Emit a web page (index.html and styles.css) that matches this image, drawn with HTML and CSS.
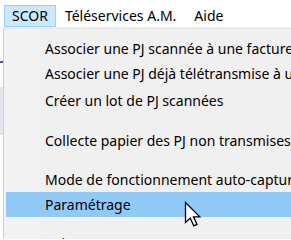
FILE: index.html
```html
<!DOCTYPE html>
<html lang="fr">
<head>
    <meta charset="UTF-8">
    <title>SCOR - Menu</title>
    <link rel="stylesheet" href="styles.css">
</head>
<body>
    <div class="menubar">
        <div class="menubar-item active">SCOR</div>
        <div class="menubar-item">Téléservices A.M.</div>
        <div class="menubar-item">Aide</div>
    </div>
    <div class="window">
        <div class="backdrop">
            <div class="backdrop-mark"></div>
            <div class="backdrop-panel"></div>
        </div>
        <div class="dropdown">
            <div class="menu-item">Associer une PJ scannée à une facture</div>
            <div class="menu-item">Associer une PJ déjà télétransmise à une facture</div>
            <div class="menu-item lot">Créer un lot de PJ scannées</div>
            <div class="separator first"></div>
            <div class="menu-item">Collecte papier des PJ non transmises</div>
            <div class="separator"></div>
            <div class="menu-item">Mode de fonctionnement auto-capture</div>
            <div class="menu-item hover">Paramétrage
                <svg class="cursor" width="20" height="28" viewBox="0 0 20 28">
                    <path d="M1.5 1.5 L1.5 21.5 L6.2 17 L9.8 24.8 L13 23.4 L9.5 15.8 L15.8 15.8 Z" fill="#fff" stroke="#000" stroke-width="1.3" stroke-linejoin="miter"/>
                </svg>
            </div>
            <div class="separator"></div>
            <div class="menu-item">Voir PJ</div>
        </div>
    </div>
</body>
</html>
```

FILE: styles.css
```css
body {
    margin: 0;
    width: 291px;
    height: 240px;
    overflow: hidden;
    background: #fff;
    font-family: 'Segoe UI', 'Noto Sans', Arial, sans-serif;
    font-size: 14px;
    color: #000;
}
.menubar {
    display: flex;
    height: 28px;
    padding: 5px 0 0 4px;
    box-sizing: border-box;
    background: #fff;
    border-bottom: 1px solid #f0f0f0;
}
.menubar-item {
    height: 22px;
    line-height: 20px;
    padding: 0 8px;
    border: 1px solid transparent;
    box-sizing: border-box;
    white-space: nowrap;
}
.menubar-item.active {
    padding: 0 7px;
    background: #cce8ff;
    border-color: #99d1ff;
}
.window {
    display: flex;
    height: 211px;
}
.backdrop {
    width: 3px;
    display: flex;
    flex-direction: column;
    background: #fff;
}
.backdrop-mark {
    height: 2px;
    margin-top: 33px;
    background: #3a5a9a;
}
.backdrop-panel {
    height: 48px;
    margin-top: 24px;
    background: #e4e5ec;
}
.dropdown {
    flex: 1;
    overflow: hidden;
    border-left: 1px solid #cfcfcf;
    border-top: 1px solid #e6e6e6;
    background: linear-gradient(to right, #f2f2f2 0, #f2f2f2 36px, #f0f0f0 36px);
    padding: 7px 0 0 2px;
}
.menu-item {
    position: relative;
    height: 25px;
    line-height: 25px;
    padding-left: 39px;
    white-space: nowrap;
    color: #000;
}
.menu-item.lot {
    margin-top: 2px;
}
.menu-item.hover {
    background: #91c9f7;
}
.separator {
    height: 14px;
}
.separator.first {
    height: 15px;
}
.cursor {
    position: absolute;
    left: 178px;
    top: 9px;
}
```
